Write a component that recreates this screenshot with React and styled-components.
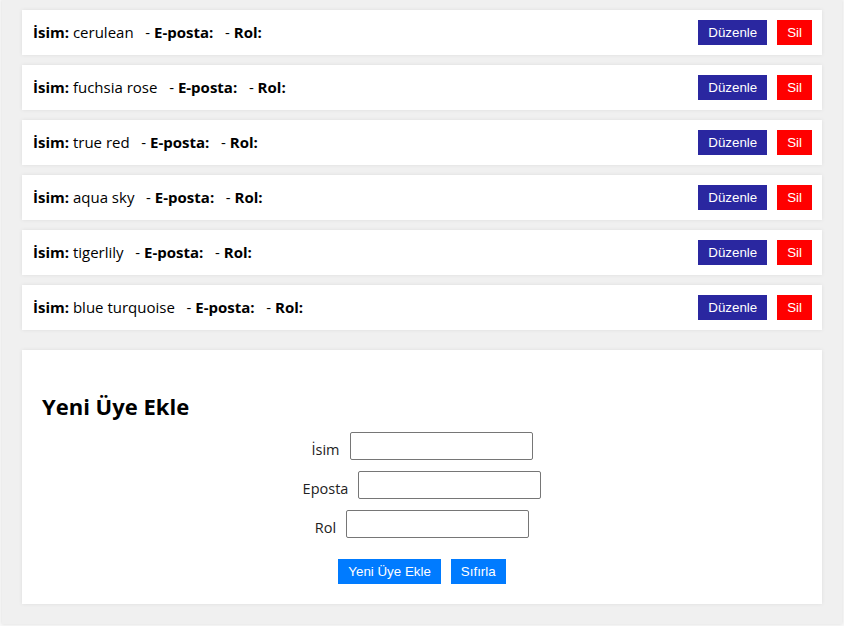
import React from "react";
import styled, { createGlobalStyle } from "styled-components";

const Global = createGlobalStyle`
  html, body { margin: 0; padding: 0; background: #f8f8f8; }
  body { font-family: "Open Sans", "Noto Sans", sans-serif; }
`;

const Container = styled.div`
  max-width: 840px;
  margin: 0 auto 2px;
  box-sizing: border-box;
  padding: 10px 20px 20px;
  background: #f0f0f0;
  box-shadow: 0 0 3px rgba(0, 0, 0, 0.12);
`;

const List = styled.div`
  display: flex;
  flex-direction: column;
  gap: 10px;
`;

const Card = styled.div`
  background: #fff;
  box-shadow: 0 0 4px rgba(0, 0, 0, 0.08);
`;

const Row = styled(Card)`
  height: 45px;
  box-sizing: border-box;
  padding: 0 10px 1px 11px;
  display: flex;
  align-items: center;
  justify-content: space-between;
`;

const Info = styled.div`
  font-size: 15px;
  color: #000;
  white-space: pre;
  b { font-weight: 700; }
`;

const Actions = styled.div`
  display: flex;
  gap: 10px;
`;

const Btn = styled.button`
  font-family: "Liberation Sans", Arial, sans-serif;
  font-size: 13.333px;
  height: 25px;
  padding: 0 10px;
  border: none;
  border-radius: 0;
  color: #fff;
  background: ${(p) => p.$bg};
  cursor: pointer;
`;

const FormCard = styled(Card)`
  margin-top: 20px;
  padding: 20px;
`;

const Title = styled.h2`
  margin: 20px 0 10px;
  font-size: 22px;
  line-height: 32px;
  font-weight: 700;
  color: #000;
`;

const Field = styled.div`
  display: flex;
  justify-content: center;
  align-items: center;
  gap: 10px;
  margin-bottom: ${(p) => (p.$last ? "21px" : "11px")};
`;

const Label = styled.label`
  font-size: 14.5px;
  color: #222;
  padding-top: 6px;
`;

const Input = styled.input`
  width: 183px;
  height: 28px;
  box-sizing: border-box;
  border: 1px solid #767676;
  border-radius: 2px;
  padding: 2px 4px;
  font-size: 14px;
`;

const FormActions = styled.div`
  display: flex;
  justify-content: center;
  gap: 10px;
`;

const members = [
  "cerulean",
  "fuchsia rose",
  "true red",
  "aqua sky",
  "tigerlily",
  "blue turquoise",
];

export default function App() {
  return (
    <>
      <Global />
      <Container>
        <List>
          {members.map((m) => (
            <Row key={m}>
              <Info>
                <b>İsim:</b> {m}   - <b>E-posta:</b>   - <b>Rol:</b>
              </Info>
              <Actions>
                <Btn $bg="#2a27a0">Düzenle</Btn>
                <Btn $bg="#ff0000">Sil</Btn>
              </Actions>
            </Row>
          ))}
        </List>
        <FormCard>
          <Title>Yeni Üye Ekle</Title>
          <Field>
            <Label>İsim</Label>
            <Input type="text" />
          </Field>
          <Field>
            <Label>Eposta</Label>
            <Input type="text" />
          </Field>
          <Field $last>
            <Label>Rol</Label>
            <Input type="text" />
          </Field>
          <FormActions>
            <Btn $bg="#007bff">Yeni Üye Ekle</Btn>
            <Btn $bg="#007bff">Sıfırla</Btn>
          </FormActions>
        </FormCard>
      </Container>
    </>
  );
}
